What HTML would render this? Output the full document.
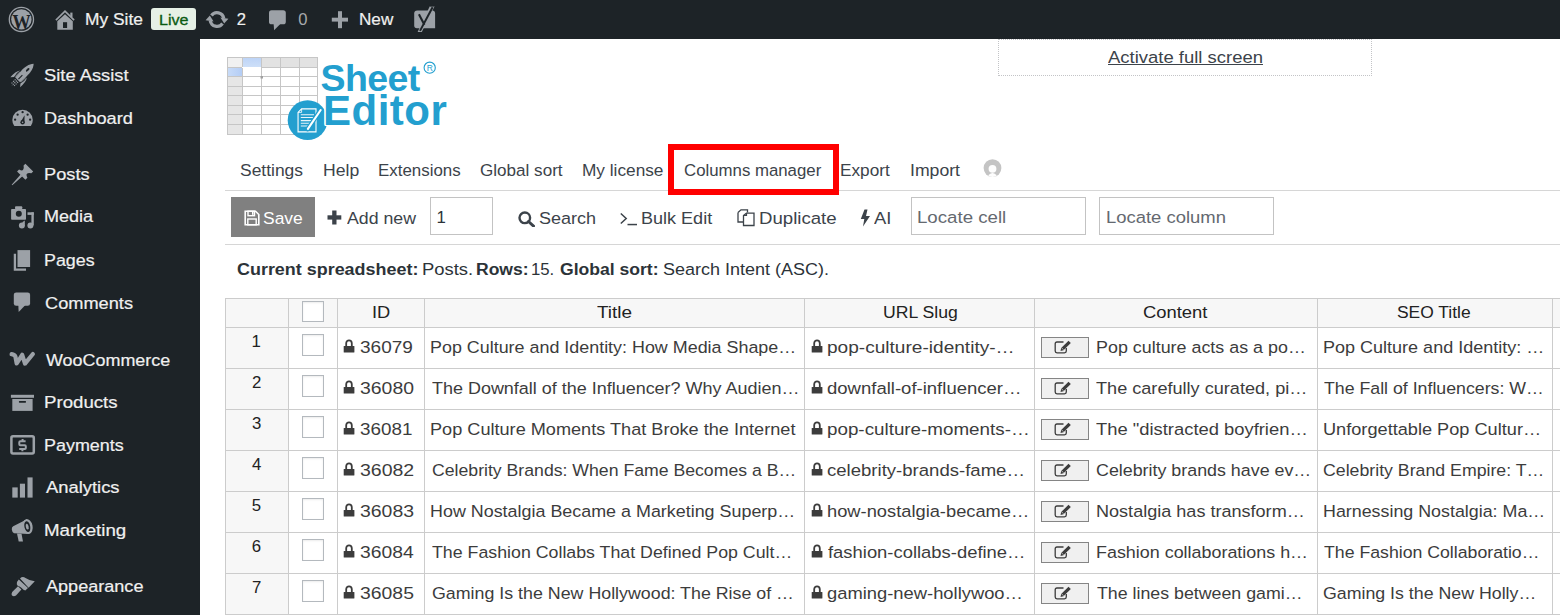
<!DOCTYPE html>
<html><head><meta charset="utf-8"><style>
html,body{margin:0;padding:0;width:1560px;height:615px;overflow:hidden;background:#fff;position:relative}
body{font-family:"Liberation Sans",sans-serif}
.a{position:absolute;display:block}
.t{position:absolute;white-space:nowrap;line-height:1;font-family:"Liberation Sans",sans-serif;transform-origin:0 0}
</style></head><body>
<div class="a" style="left:0;top:0;width:1560px;height:39px;background:#1d2327"></div>
<div class="a" style="left:0;top:39px;width:200px;height:576px;background:#1d2327"></div>
<svg class="a" style="left:0px;top:0px;overflow:visible" width="44" height="39" viewBox="0 0 44 39"><circle cx="21.4" cy="19.4" r="12.1" fill="none" stroke="#9ca1a7" stroke-width="1.3"/>
      <circle cx="21.4" cy="19.4" r="10.2" fill="#9ca1a7"/>
      <text x="21.5" y="28.6" font-family="Liberation Serif" font-weight="700" font-size="21" text-anchor="middle" textLength="18.5" lengthAdjust="spacingAndGlyphs" fill="#1d2327">W</text></svg>
<svg class="a" style="left:0px;top:0px;overflow:visible" width="80" height="39" viewBox="0 0 80 39"><path d="M56.5 19.5 L65 11.2 L73.5 19.5" fill="none" stroke="#9ca1a7" stroke-width="1.7" stroke-linecap="square"/>
      <rect x="70.3" y="12.6" width="2.2" height="4.6" fill="#9ca1a7"/>
      <path d="M57.3 21.2 L65 14.2 L72.8 21.2 L72.8 29.7 L57.3 29.7 Z" fill="#9ca1a7"/>
      <rect x="63" y="22.2" width="4.1" height="5.8" fill="#1d2327"/></svg>
<svg class="a" style="left:0px;top:0px;overflow:visible" width="240" height="39" viewBox="0 0 240 39"><path d="M211.46 15.47 A6.85 6.85 0 0 1 223.75 18.31" fill="none" stroke="#9ca1a7" stroke-width="3.2"/>
      <path d="M220.4 17.4 L228.4 18.8 L224.2 23.6 Z" fill="#9ca1a7"/>
      <path d="M222.54 23.53 A6.85 6.85 0 0 1 210.25 20.69" fill="none" stroke="#9ca1a7" stroke-width="3.2"/>
      <path d="M213.6 21.6 L205.6 20.2 L209.8 15.4 Z" fill="#9ca1a7"/></svg>
<svg class="a" style="left:0px;top:0px;overflow:visible" width="300" height="39" viewBox="0 0 300 39"><rect x="269" y="10.3" width="16.8" height="14" rx="2.6" fill="#9ca1a7"/><path d="M273.6 23.5 L274.1 30.3 L280.8 23.5 Z" fill="#9ca1a7"/></svg>
<svg class="a" style="left:0px;top:0px;overflow:visible" width="360" height="39" viewBox="0 0 360 39"><rect x="338" y="11.2" width="4" height="17" fill="#9ca1a7"/><rect x="331.8" y="17.7" width="16.2" height="3.9" fill="#9ca1a7"/></svg>
<svg class="a" style="left:0px;top:0px;overflow:visible" width="450" height="39" viewBox="0 0 450 39"><path d="M417.3 10.5 H432.1 Q435.1 10.5 435.1 13.5 V28.2 H416.9 Q414.2 28.2 414.2 25.5 V13.6 Q414.2 10.5 417.3 10.5 Z" fill="#9ca1a7"/>
      <path d="M429.8 6.2 L434.6 6.2 L421.8 32 L417.6 32 Z" fill="#9ca1a7"/>
      <path d="M432.6 7.2 L420 30.9" stroke="#1d2327" stroke-width="2"/>
      <path d="M418.9 14.3 L424.4 24.8" stroke="#1d2327" stroke-width="2.1"/>
      <path d="M429.8 6.2 L434.6 6.2" stroke="#1d2327" stroke-width="0.8"/></svg>
<div class="a" style="left:151px;top:8px;width:45px;height:22px;background:#e6f0e6;border-radius:3px"></div>
<svg class="a" style="left:0px;top:0px;overflow:visible" width="40" height="100" viewBox="0 0 40 100"><g transform="translate(22.6 74.9) rotate(45)">
      <path d="M0 -15.6 C3.4 -12 4 -7 3.8 -2 L3.3 7 L-3.3 7 L-3.8 -2 C-4 -7 -3.4 -12 0 -15.6 Z" fill="#9ca1a7"/>
      <ellipse cx="0" cy="-7.2" rx="1.05" ry="2.3" fill="#1d2327"/>
      <rect x="-0.55" y="0.3" width="1.1" height="5.6" fill="#1d2327"/>
      <path d="M-4.9 -1.2 Q-7.6 2.5 -6.9 10.4 L-4.5 7.6 Q-6 3 -4.9 -1.2 Z" fill="#9ca1a7"/>
      <path d="M4.9 -1.2 Q7.6 2.5 6.9 10.4 L4.5 7.6 Q6 3 4.9 -1.2 Z" fill="#9ca1a7"/>
      <path d="M-3 -1 L-4.6 0 L-4.4 6 L-3 7 Z M3 -1 L4.6 0 L4.4 6 L3 7 Z" fill="#9ca1a7" opacity="0.6"/>
      <path d="M-1.8 8.2 V14 M0 8.2 V15 M1.8 8.2 V14" stroke="#9ca1a7" stroke-width="1.1" stroke-dasharray="1.2 1"/></g></svg>
<svg class="a" style="left:0px;top:0px;overflow:visible" width="40" height="140" viewBox="0 0 40 140"><defs><clipPath id="gclip"><rect x="0" y="100" width="40" height="26.1"/></clipPath></defs>
      <circle cx="22.55" cy="119.9" r="10.25" fill="#9ca1a7" clip-path="url(#gclip)"/>
      <circle cx="22.6" cy="112.2" r="1.15" fill="#1d2327"/><circle cx="17.6" cy="114.7" r="1.15" fill="#1d2327"/><circle cx="27.6" cy="114.7" r="1.15" fill="#1d2327"/>
      <circle cx="15.1" cy="119.7" r="1.15" fill="#1d2327"/><circle cx="30.1" cy="119.7" r="1.15" fill="#1d2327"/>
      <path d="M24.6 115.2 L21 121.6 L24.4 122.6 Z" fill="#1d2327"/><circle cx="22.6" cy="122.2" r="2.2" fill="#1d2327"/><circle cx="22.6" cy="122.3" r="0.8" fill="#9ca1a7"/></svg>
<svg class="a" style="left:0px;top:0px;overflow:visible" width="40" height="200" viewBox="0 0 40 200"><g transform="translate(29.3 167.6) rotate(45)">
      <path d="M-5.5 0 H5.5 V2.6 Q2.6 4.5 2.8 6 Q2.6 7.5 5.9 8.6 V11.4 H-5.9 V8.6 Q-2.6 7.5 -2.8 6 Q-2.6 4.5 -5.5 2.6 Z" fill="#9ca1a7"/>
      <path d="M-1.3 11 L1.3 11 L0.4 24.5 L-0.4 24.5 Z" fill="#9ca1a7"/></g></svg>
<svg class="a" style="left:6px;top:203px;overflow:visible" width="34" height="30" viewBox="0 0 34 30"><rect x="5.1" y="5.9" width="14.9" height="10.9" rx="0.8" fill="#9ca1a7"/><rect x="9" y="3.2" width="7.3" height="3" rx="1" fill="#9ca1a7"/>
      <circle cx="12.8" cy="10.7" r="3" fill="#1d2327"/>
      <rect x="25.4" y="9.3" width="2.4" height="13" fill="#9ca1a7"/><rect x="21.5" y="9.3" width="6.3" height="2.6" fill="#9ca1a7"/>
      <circle cx="24.4" cy="22.6" r="3" fill="#9ca1a7"/><circle cx="15.9" cy="22.4" r="3" fill="#9ca1a7"/><path d="M16.2 19.3 L18.8 17.4 L18.8 22 Z" fill="#9ca1a7"/></svg>
<svg class="a" style="left:6px;top:246px;overflow:visible" width="34" height="30" viewBox="0 0 34 30"><rect x="11.5" y="4.1" width="12.6" height="16.9" fill="#9ca1a7"/><path d="M8.9 7.8 V23.7 H20" fill="none" stroke="#9ca1a7" stroke-width="2.3"/></svg>
<svg class="a" style="left:6px;top:289px;overflow:visible" width="34" height="30" viewBox="0 0 34 30"><rect x="7.8" y="3.4" width="16.3" height="13.4" rx="2.4" fill="#9ca1a7"/><path d="M12.3 16 L12.7 22.9 L19.4 16 Z" fill="#9ca1a7"/></svg>
<svg class="a" style="left:6px;top:345px;overflow:visible" width="34" height="30" viewBox="0 0 34 30"><path d="M5.6 9.2 Q8.6 9.6 9.4 11.5 L10.7 18.5 L16.2 9.8 L19 18.6 L26.9 9" fill="none" stroke="#9ca1a7" stroke-width="4.2" stroke-linecap="round" stroke-linejoin="round"/></svg>
<svg class="a" style="left:6px;top:388px;overflow:visible" width="34" height="30" viewBox="0 0 34 30"><rect x="4.9" y="6.8" width="23.1" height="3" fill="#9ca1a7"/><rect x="6.3" y="11" width="20.3" height="11.9" fill="#9ca1a7"/><rect x="12.9" y="12.9" width="7.1" height="1.8" rx="0.6" fill="#1d2327"/></svg>
<svg class="a" style="left:6px;top:430px;overflow:visible" width="34" height="30" viewBox="0 0 34 30"><rect x="5.4" y="6.3" width="22.4" height="17.1" rx="1.6" fill="none" stroke="#9ca1a7" stroke-width="2.5"/>
      <path d="M19.6 11.3 H14.3 Q13.3 11.3 13.3 12.3 V14.2 Q13.3 15.2 14.3 15.2 H18.8 Q19.8 15.2 19.8 16.2 V18 Q19.8 19 18.8 19 H13.2" fill="none" stroke="#9ca1a7" stroke-width="2"/>
      <path d="M16.6 9 V11.3 M16.4 19 V21.2" stroke="#9ca1a7" stroke-width="2"/></svg>
<svg class="a" style="left:6px;top:472px;overflow:visible" width="34" height="30" viewBox="0 0 34 30"><rect x="6.3" y="15.4" width="5.4" height="10.2" fill="#9ca1a7"/><rect x="13.9" y="11.7" width="5.1" height="13.9" fill="#9ca1a7"/><rect x="21.5" y="5.4" width="5.1" height="20.2" fill="#9ca1a7"/></svg>
<svg class="a" style="left:6px;top:515px;overflow:visible" width="34" height="30" viewBox="0 0 34 30"><path d="M21 4.2 L7.2 11.3 Q5.5 12.3 5.8 14.4 Q6.2 17.5 8 18.2 L22.5 19 Z" fill="#9ca1a7"/>
      <ellipse cx="21.6" cy="11.6" rx="5" ry="7.6" transform="rotate(-12 21.6 11.6)" fill="#9ca1a7"/>
      <ellipse cx="21.3" cy="11.6" rx="2.9" ry="5.5" transform="rotate(-12 21.3 11.6)" fill="#1d2327"/>
      <ellipse cx="21.2" cy="11.6" rx="1.4" ry="3" transform="rotate(-12 21.2 11.6)" fill="#9ca1a7"/>
      <path d="M11 18.5 L15.5 18.8 L17 26.6 L12.7 26.6 Z" fill="#9ca1a7"/></svg>
<svg class="a" style="left:6px;top:572px;overflow:visible" width="34" height="30" viewBox="0 0 34 30"><path d="M14 6.5 Q16.5 4 19.5 6 Q23 8.5 28.8 9.2 L22.6 15.8 Z" fill="#9ca1a7"/>
      <path d="M12.8 7.6 L22 16 L19.3 18.6 L17.5 17.8 L15 15.5 L13.5 14.5 Q11.2 14 10.8 12.2 Q10.4 10 12.8 7.6 Z" fill="#9ca1a7"/>
      <path d="M12 14.2 L15.4 17.6 L10 23.4 Q8 24.8 6 23.6 Q4.9 22 6.2 20 Z" fill="#9ca1a7"/></svg>
<svg class="a" style="left:227px;top:57px" width="91" height="78" viewBox="0 0 91 78"><defs><linearGradient id="bh" x1="0" y1="0" x2="0" y2="1"><stop offset="0" stop-color="#bcd3f7"/><stop offset="1" stop-color="#cddff8"/></linearGradient><linearGradient id="bv" x1="0" y1="0" x2="1" y2="0"><stop offset="0" stop-color="#c9dcf8"/><stop offset="1" stop-color="#b4cdf5"/></linearGradient></defs><rect x="0" y="0" width="91" height="78" fill="#fff"/><rect x="0" y="0" width="91" height="10" fill="#e2e2e2"/><rect x="0" y="0" width="15" height="78" fill="#e6e6e6"/><rect x="0" y="0" width="15" height="10" fill="#f1f1f1"/><rect x="15" y="0" width="19" height="10" fill="url(#bh)"/><rect x="0" y="10" width="15" height="9" fill="url(#bv)"/><rect x="0" y="0" width="1" height="78" fill="#c6c6c6"/><rect x="15" y="0" width="1" height="78" fill="#c6c6c6"/><rect x="34" y="0" width="1" height="78" fill="#c6c6c6"/><rect x="53" y="0" width="1" height="78" fill="#c6c6c6"/><rect x="72" y="0" width="1" height="78" fill="#c6c6c6"/><rect x="90" y="0" width="1" height="78" fill="#c6c6c6"/><rect x="0" y="0" width="91" height="1" fill="#c6c6c6"/><rect x="0" y="10" width="91" height="1" fill="#c6c6c6"/><rect x="0" y="19" width="91" height="1" fill="#c6c6c6"/><rect x="0" y="29" width="91" height="1" fill="#c6c6c6"/><rect x="0" y="38" width="91" height="1" fill="#c6c6c6"/><rect x="0" y="48" width="91" height="1" fill="#c6c6c6"/><rect x="0" y="57" width="91" height="1" fill="#c6c6c6"/><rect x="0" y="67" width="91" height="1" fill="#c6c6c6"/><rect x="0" y="77" width="91" height="1" fill="#c6c6c6"/><rect x="15" y="10" width="19" height="1" fill="#fff"/><rect x="33.5" y="19" width="2.5" height="2.5" fill="#a0a0a0"/></svg>
<svg class="a" style="left:284px;top:96px" width="48" height="48" viewBox="0 0 48 48"><circle cx="23.6" cy="24.2" r="19.9" fill="#239fcf"/>
       <path d="M17.6 12.9 H32 V35.9 H14.05 V16.4 Z" fill="none" stroke="#fff" stroke-width="1.1"/>
       <path d="M14.05 16.4 H17.6 V12.9" fill="none" stroke="#fff" stroke-width="0.8"/>
       <path d="M16.8 18.7 H30 M16.8 21.5 H30 M16.8 24.6 H30 M16.8 27.3 H27 M16.8 30 H24" stroke="#fff" stroke-width="1.1" opacity="0.9"/>
       <path d="M36.9 13.6 L23.6 33.2" stroke="#239fcf" stroke-width="4.4" stroke-linecap="round"/>
       <path d="M36.7 14 L23.9 32.8" stroke="#fff" stroke-width="2.1" stroke-linecap="round"/></svg>
<div class="t" style="left:320.5px;top:57.5px;font-size:37.5px;font-weight:700;color:#239fcf;letter-spacing:-0.6px;line-height:1.117">Sheet</div>
<div class="t" style="left:323px;top:88.0px;font-size:42px;font-weight:700;color:#239fcf;letter-spacing:0.5px;line-height:1.117;text-shadow:-1.6px 0 0 #fff,-1.2px -1.2px 0 #fff,-1.2px 1.2px 0 #fff">Editor</div>
<svg class="a" style="left:423px;top:61px" width="14" height="14" viewBox="0 0 14 14"><circle cx="6.7" cy="6.7" r="5.6" fill="none" stroke="#239fcf" stroke-width="1.1"/><text x="6.8" y="10" font-family="Liberation Sans" font-size="8.5" text-anchor="middle" fill="#239fcf">R</text></svg>
<div class="a" style="left:998px;top:39px;width:372px;height:35px;border:1px dotted #c3c4c7;background:#fff"></div>
<div class="a" style="left:225px;top:190px;width:1335px;height:1px;background:#d6d6d6"></div>
<div class="a" style="left:668px;top:144px;width:159px;height:39px;border:6px solid #ff0000"></div>
<div class="a" style="left:225px;top:244px;width:1335px;height:1px;background:#d6d6d6"></div>
<div class="a" style="left:231px;top:197px;width:84px;height:40px;background:#808080"></div>
<div class="a" style="left:430px;top:197px;width:63px;height:38px;box-sizing:border-box;border:1px solid #c3c3c3;background:#fff"></div>
<div class="a" style="left:911px;top:197px;width:175px;height:38px;box-sizing:border-box;border:1px solid #c3c3c3;background:#fff"></div>
<div class="a" style="left:1099px;top:197px;width:175px;height:38px;box-sizing:border-box;border:1px solid #c3c3c3;background:#fff"></div>
<svg class="a" style="left:243.5px;top:209.5px" width="16" height="16" viewBox="0 0 16 16"><path d="M1.2 1.2 H11.5 L14.8 4.5 V14.8 H1.2 Z" fill="none" stroke="#fff" stroke-width="1.6"/>
      <rect x="4" y="1.2" width="6.5" height="4.5" fill="none" stroke="#fff" stroke-width="1.4"/><rect x="8" y="2" width="1.5" height="2.8" fill="#fff"/>
      <rect x="3.8" y="9" width="8.4" height="5.8" fill="none" stroke="#fff" stroke-width="1.4"/></svg>
<svg class="a" style="left:327px;top:209.5px" width="15" height="15" viewBox="0 0 15 15"><rect x="5.2" y="0.5" width="4.3" height="14" fill="#3c434a"/><rect x="0.5" y="5.3" width="13.8" height="4.3" fill="#3c434a"/></svg>
<svg class="a" style="left:518px;top:210.5px" width="17" height="16" viewBox="0 0 17 16"><circle cx="6.8" cy="6.8" r="5.3" fill="none" stroke="#3c434a" stroke-width="2.4"/><path d="M10.5 10.5 L15.5 15" stroke="#3c434a" stroke-width="3" stroke-linecap="round"/></svg>
<svg class="a" style="left:620px;top:211px" width="18" height="15" viewBox="0 0 18 15"><path d="M0.8 2.5 L6.2 7.5 L0.8 12.5" fill="none" stroke="#3c434a" stroke-width="1.5"/><rect x="7.5" y="12.8" width="9.5" height="1.5" fill="#3c434a"/></svg>
<svg class="a" style="left:737px;top:209px" width="18" height="18" viewBox="0 0 18 18"><path d="M1 3.5 L4 0.8 H10.5 V3.5" fill="none" stroke="#3c434a" stroke-width="1.3"/><path d="M1 3.5 V13 H6" fill="none" stroke="#3c434a" stroke-width="1.3"/>
      <path d="M6.5 6.5 L9.5 4.2 H17 V16.5 H6.5 Z" fill="#fff" stroke="#3c434a" stroke-width="1.3"/><path d="M6.5 6.5 H9.5 V4.2" fill="none" stroke="#3c434a" stroke-width="1.2"/></svg>
<svg class="a" style="left:859.5px;top:208.5px" width="11" height="18" viewBox="0 0 11 18"><path d="M4.5 0.5 L7.5 0.5 L6 7 L10 7 L3 17.5 L4.3 10 L0.8 10 Z" fill="#3c434a"/></svg>
<svg class="a" style="left:982.5px;top:158.5px" width="19" height="19" viewBox="0 0 19 19"><defs><clipPath id="av"><circle cx="9.5" cy="9.1" r="8.9"/></clipPath></defs>
      <circle cx="9.5" cy="9.1" r="8.9" fill="#c4c4c4"/><g clip-path="url(#av)"><circle cx="9.5" cy="9.8" r="3.9" fill="#fdfdfd"/><ellipse cx="9.5" cy="19.5" rx="4.6" ry="5.5" fill="#fdfdfd"/></g></svg>
<div class="a" style="left:225px;top:298px;width:1335px;height:29px;background:#f7f7f7"></div>
<div class="a" style="left:225px;top:327px;width:63px;height:288px;background:#f7f7f7"></div>
<div class="a" style="left:225px;top:298px;width:1335px;height:1px;background:#cccccc"></div>
<div class="a" style="left:225px;top:327px;width:1335px;height:1px;background:#cccccc"></div>
<div class="a" style="left:225px;top:368px;width:1335px;height:1px;background:#cccccc"></div>
<div class="a" style="left:225px;top:409px;width:1335px;height:1px;background:#cccccc"></div>
<div class="a" style="left:225px;top:450px;width:1335px;height:1px;background:#cccccc"></div>
<div class="a" style="left:225px;top:491px;width:1335px;height:1px;background:#cccccc"></div>
<div class="a" style="left:225px;top:532px;width:1335px;height:1px;background:#cccccc"></div>
<div class="a" style="left:225px;top:573px;width:1335px;height:1px;background:#cccccc"></div>
<div class="a" style="left:225px;top:614px;width:1335px;height:1px;background:#cccccc"></div>
<div class="a" style="left:225px;top:298px;width:1px;height:317px;background:#cccccc"></div>
<div class="a" style="left:288px;top:298px;width:1px;height:317px;background:#cccccc"></div>
<div class="a" style="left:337px;top:298px;width:1px;height:317px;background:#cccccc"></div>
<div class="a" style="left:424px;top:298px;width:1px;height:317px;background:#cccccc"></div>
<div class="a" style="left:804px;top:298px;width:1px;height:317px;background:#cccccc"></div>
<div class="a" style="left:1034px;top:298px;width:1px;height:317px;background:#cccccc"></div>
<div class="a" style="left:1317px;top:298px;width:1px;height:317px;background:#cccccc"></div>
<div class="a" style="left:1552px;top:298px;width:1px;height:317px;background:#cccccc"></div>
<div class="a" style="left:302px;top:301px;width:22px;height:21px;box-sizing:border-box;border:1px solid #b4b9be;background:#fff;box-shadow:inset 0 1px 2px rgba(0,0,0,.08)"></div>
<div class="a" style="left:302px;top:334px;width:22px;height:22px;box-sizing:border-box;border:1px solid #b4b9be;background:#fff;box-shadow:inset 0 1px 2px rgba(0,0,0,.08)"></div>
<svg class="a" style="left:343px;top:339px" width="12" height="14" viewBox="0 0 12 14"><path d="M3.2 7 V4.3 A2.8 3 0 0 1 8.8 4.3 V7" fill="none" stroke="#3c3c3c" stroke-width="1.8"/><rect x="0.7" y="6.9" width="10.7" height="6.6" rx="0.6" fill="#3c3c3c"/></svg>
<svg class="a" style="left:810.5px;top:339px" width="12" height="14" viewBox="0 0 12 14"><path d="M3.2 7 V4.3 A2.8 3 0 0 1 8.8 4.3 V7" fill="none" stroke="#3c3c3c" stroke-width="1.8"/><rect x="0.7" y="6.9" width="10.7" height="6.6" rx="0.6" fill="#3c3c3c"/></svg>
<div class="a" style="left:1041px;top:337px;width:48px;height:21px;box-sizing:border-box;border:1px solid #858585;background:#f0f0f0"></div>
<svg class="a" style="left:1054px;top:340px" width="18" height="14" viewBox="0 0 18 14"><path d="M9.5 2 H3 Q1.2 2 1.2 3.8 V11 Q1.2 12.8 3 12.8 H10.5 Q12.3 12.8 12.3 11 V8" fill="none" stroke="#3c3c3c" stroke-width="1.3"/><path d="M14.5 0.8 L16.8 3 L9.5 10.3 L6.5 11 L7.2 8 Z" fill="#3c3c3c"/><path d="M8 8.2 L9.3 9.6" stroke="#f0f0f0" stroke-width="0.8"/></svg>
<div class="a" style="left:302px;top:375px;width:22px;height:22px;box-sizing:border-box;border:1px solid #b4b9be;background:#fff;box-shadow:inset 0 1px 2px rgba(0,0,0,.08)"></div>
<svg class="a" style="left:343px;top:380px" width="12" height="14" viewBox="0 0 12 14"><path d="M3.2 7 V4.3 A2.8 3 0 0 1 8.8 4.3 V7" fill="none" stroke="#3c3c3c" stroke-width="1.8"/><rect x="0.7" y="6.9" width="10.7" height="6.6" rx="0.6" fill="#3c3c3c"/></svg>
<svg class="a" style="left:810.5px;top:380px" width="12" height="14" viewBox="0 0 12 14"><path d="M3.2 7 V4.3 A2.8 3 0 0 1 8.8 4.3 V7" fill="none" stroke="#3c3c3c" stroke-width="1.8"/><rect x="0.7" y="6.9" width="10.7" height="6.6" rx="0.6" fill="#3c3c3c"/></svg>
<div class="a" style="left:1041px;top:378px;width:48px;height:21px;box-sizing:border-box;border:1px solid #858585;background:#f0f0f0"></div>
<svg class="a" style="left:1054px;top:381px" width="18" height="14" viewBox="0 0 18 14"><path d="M9.5 2 H3 Q1.2 2 1.2 3.8 V11 Q1.2 12.8 3 12.8 H10.5 Q12.3 12.8 12.3 11 V8" fill="none" stroke="#3c3c3c" stroke-width="1.3"/><path d="M14.5 0.8 L16.8 3 L9.5 10.3 L6.5 11 L7.2 8 Z" fill="#3c3c3c"/><path d="M8 8.2 L9.3 9.6" stroke="#f0f0f0" stroke-width="0.8"/></svg>
<div class="a" style="left:302px;top:416px;width:22px;height:22px;box-sizing:border-box;border:1px solid #b4b9be;background:#fff;box-shadow:inset 0 1px 2px rgba(0,0,0,.08)"></div>
<svg class="a" style="left:343px;top:421px" width="12" height="14" viewBox="0 0 12 14"><path d="M3.2 7 V4.3 A2.8 3 0 0 1 8.8 4.3 V7" fill="none" stroke="#3c3c3c" stroke-width="1.8"/><rect x="0.7" y="6.9" width="10.7" height="6.6" rx="0.6" fill="#3c3c3c"/></svg>
<svg class="a" style="left:810.5px;top:421px" width="12" height="14" viewBox="0 0 12 14"><path d="M3.2 7 V4.3 A2.8 3 0 0 1 8.8 4.3 V7" fill="none" stroke="#3c3c3c" stroke-width="1.8"/><rect x="0.7" y="6.9" width="10.7" height="6.6" rx="0.6" fill="#3c3c3c"/></svg>
<div class="a" style="left:1041px;top:419px;width:48px;height:21px;box-sizing:border-box;border:1px solid #858585;background:#f0f0f0"></div>
<svg class="a" style="left:1054px;top:422px" width="18" height="14" viewBox="0 0 18 14"><path d="M9.5 2 H3 Q1.2 2 1.2 3.8 V11 Q1.2 12.8 3 12.8 H10.5 Q12.3 12.8 12.3 11 V8" fill="none" stroke="#3c3c3c" stroke-width="1.3"/><path d="M14.5 0.8 L16.8 3 L9.5 10.3 L6.5 11 L7.2 8 Z" fill="#3c3c3c"/><path d="M8 8.2 L9.3 9.6" stroke="#f0f0f0" stroke-width="0.8"/></svg>
<div class="a" style="left:302px;top:457px;width:22px;height:22px;box-sizing:border-box;border:1px solid #b4b9be;background:#fff;box-shadow:inset 0 1px 2px rgba(0,0,0,.08)"></div>
<svg class="a" style="left:343px;top:462px" width="12" height="14" viewBox="0 0 12 14"><path d="M3.2 7 V4.3 A2.8 3 0 0 1 8.8 4.3 V7" fill="none" stroke="#3c3c3c" stroke-width="1.8"/><rect x="0.7" y="6.9" width="10.7" height="6.6" rx="0.6" fill="#3c3c3c"/></svg>
<svg class="a" style="left:810.5px;top:462px" width="12" height="14" viewBox="0 0 12 14"><path d="M3.2 7 V4.3 A2.8 3 0 0 1 8.8 4.3 V7" fill="none" stroke="#3c3c3c" stroke-width="1.8"/><rect x="0.7" y="6.9" width="10.7" height="6.6" rx="0.6" fill="#3c3c3c"/></svg>
<div class="a" style="left:1041px;top:460px;width:48px;height:21px;box-sizing:border-box;border:1px solid #858585;background:#f0f0f0"></div>
<svg class="a" style="left:1054px;top:463px" width="18" height="14" viewBox="0 0 18 14"><path d="M9.5 2 H3 Q1.2 2 1.2 3.8 V11 Q1.2 12.8 3 12.8 H10.5 Q12.3 12.8 12.3 11 V8" fill="none" stroke="#3c3c3c" stroke-width="1.3"/><path d="M14.5 0.8 L16.8 3 L9.5 10.3 L6.5 11 L7.2 8 Z" fill="#3c3c3c"/><path d="M8 8.2 L9.3 9.6" stroke="#f0f0f0" stroke-width="0.8"/></svg>
<div class="a" style="left:302px;top:498px;width:22px;height:22px;box-sizing:border-box;border:1px solid #b4b9be;background:#fff;box-shadow:inset 0 1px 2px rgba(0,0,0,.08)"></div>
<svg class="a" style="left:343px;top:503px" width="12" height="14" viewBox="0 0 12 14"><path d="M3.2 7 V4.3 A2.8 3 0 0 1 8.8 4.3 V7" fill="none" stroke="#3c3c3c" stroke-width="1.8"/><rect x="0.7" y="6.9" width="10.7" height="6.6" rx="0.6" fill="#3c3c3c"/></svg>
<svg class="a" style="left:810.5px;top:503px" width="12" height="14" viewBox="0 0 12 14"><path d="M3.2 7 V4.3 A2.8 3 0 0 1 8.8 4.3 V7" fill="none" stroke="#3c3c3c" stroke-width="1.8"/><rect x="0.7" y="6.9" width="10.7" height="6.6" rx="0.6" fill="#3c3c3c"/></svg>
<div class="a" style="left:1041px;top:501px;width:48px;height:21px;box-sizing:border-box;border:1px solid #858585;background:#f0f0f0"></div>
<svg class="a" style="left:1054px;top:504px" width="18" height="14" viewBox="0 0 18 14"><path d="M9.5 2 H3 Q1.2 2 1.2 3.8 V11 Q1.2 12.8 3 12.8 H10.5 Q12.3 12.8 12.3 11 V8" fill="none" stroke="#3c3c3c" stroke-width="1.3"/><path d="M14.5 0.8 L16.8 3 L9.5 10.3 L6.5 11 L7.2 8 Z" fill="#3c3c3c"/><path d="M8 8.2 L9.3 9.6" stroke="#f0f0f0" stroke-width="0.8"/></svg>
<div class="a" style="left:302px;top:539px;width:22px;height:22px;box-sizing:border-box;border:1px solid #b4b9be;background:#fff;box-shadow:inset 0 1px 2px rgba(0,0,0,.08)"></div>
<svg class="a" style="left:343px;top:544px" width="12" height="14" viewBox="0 0 12 14"><path d="M3.2 7 V4.3 A2.8 3 0 0 1 8.8 4.3 V7" fill="none" stroke="#3c3c3c" stroke-width="1.8"/><rect x="0.7" y="6.9" width="10.7" height="6.6" rx="0.6" fill="#3c3c3c"/></svg>
<svg class="a" style="left:810.5px;top:544px" width="12" height="14" viewBox="0 0 12 14"><path d="M3.2 7 V4.3 A2.8 3 0 0 1 8.8 4.3 V7" fill="none" stroke="#3c3c3c" stroke-width="1.8"/><rect x="0.7" y="6.9" width="10.7" height="6.6" rx="0.6" fill="#3c3c3c"/></svg>
<div class="a" style="left:1041px;top:542px;width:48px;height:21px;box-sizing:border-box;border:1px solid #858585;background:#f0f0f0"></div>
<svg class="a" style="left:1054px;top:545px" width="18" height="14" viewBox="0 0 18 14"><path d="M9.5 2 H3 Q1.2 2 1.2 3.8 V11 Q1.2 12.8 3 12.8 H10.5 Q12.3 12.8 12.3 11 V8" fill="none" stroke="#3c3c3c" stroke-width="1.3"/><path d="M14.5 0.8 L16.8 3 L9.5 10.3 L6.5 11 L7.2 8 Z" fill="#3c3c3c"/><path d="M8 8.2 L9.3 9.6" stroke="#f0f0f0" stroke-width="0.8"/></svg>
<div class="a" style="left:302px;top:580px;width:22px;height:22px;box-sizing:border-box;border:1px solid #b4b9be;background:#fff;box-shadow:inset 0 1px 2px rgba(0,0,0,.08)"></div>
<svg class="a" style="left:343px;top:585px" width="12" height="14" viewBox="0 0 12 14"><path d="M3.2 7 V4.3 A2.8 3 0 0 1 8.8 4.3 V7" fill="none" stroke="#3c3c3c" stroke-width="1.8"/><rect x="0.7" y="6.9" width="10.7" height="6.6" rx="0.6" fill="#3c3c3c"/></svg>
<svg class="a" style="left:810.5px;top:585px" width="12" height="14" viewBox="0 0 12 14"><path d="M3.2 7 V4.3 A2.8 3 0 0 1 8.8 4.3 V7" fill="none" stroke="#3c3c3c" stroke-width="1.8"/><rect x="0.7" y="6.9" width="10.7" height="6.6" rx="0.6" fill="#3c3c3c"/></svg>
<div class="a" style="left:1041px;top:583px;width:48px;height:21px;box-sizing:border-box;border:1px solid #858585;background:#f0f0f0"></div>
<svg class="a" style="left:1054px;top:586px" width="18" height="14" viewBox="0 0 18 14"><path d="M9.5 2 H3 Q1.2 2 1.2 3.8 V11 Q1.2 12.8 3 12.8 H10.5 Q12.3 12.8 12.3 11 V8" fill="none" stroke="#3c3c3c" stroke-width="1.3"/><path d="M14.5 0.8 L16.8 3 L9.5 10.3 L6.5 11 L7.2 8 Z" fill="#3c3c3c"/><path d="M8 8.2 L9.3 9.6" stroke="#f0f0f0" stroke-width="0.8"/></svg>
<div class="t" style="left:84.58px;top:12px;font-size:16.6px;color:#f0f0f0;font-weight:400;transform:scaleX(1.0468);-webkit-text-stroke:0.2px #f0f0f0;">My Site</div>
<div class="t" style="left:158.84px;top:12px;font-size:15px;color:#0a5a12;font-weight:400;transform:scaleX(1.0738);-webkit-text-stroke:0.3px #0a5a12;">Live</div>
<div class="t" style="left:236.86px;top:12px;font-size:16.6px;color:#f0f0f0;font-weight:400;-webkit-text-stroke:0.2px #f0f0f0;">2</div>
<div class="t" style="left:298.13px;top:12px;font-size:16.6px;color:#a7aaad;font-weight:400;">0</div>
<div class="t" style="left:358.64px;top:12px;font-size:16.6px;color:#f0f0f0;font-weight:400;transform:scaleX(1.0322);-webkit-text-stroke:0.2px #f0f0f0;">New</div>
<div class="t" style="left:44.28px;top:68px;font-size:16.8px;color:#f0f0f0;font-weight:400;transform:scaleX(1.0929);-webkit-text-stroke:0.2px #f0f0f0;">Site Assist</div>
<div class="t" style="left:44.00px;top:111px;font-size:16.8px;color:#f0f0f0;font-weight:400;transform:scaleX(1.0827);-webkit-text-stroke:0.2px #f0f0f0;">Dashboard</div>
<div class="t" style="left:44.02px;top:167px;font-size:16.8px;color:#f0f0f0;font-weight:400;transform:scaleX(1.0858);-webkit-text-stroke:0.2px #f0f0f0;">Posts</div>
<div class="t" style="left:44.08px;top:209px;font-size:16.8px;color:#f0f0f0;font-weight:400;transform:scaleX(1.0756);-webkit-text-stroke:0.2px #f0f0f0;">Media</div>
<div class="t" style="left:44.11px;top:253px;font-size:16.8px;color:#f0f0f0;font-weight:400;transform:scaleX(1.0631);-webkit-text-stroke:0.2px #f0f0f0;">Pages</div>
<div class="t" style="left:44.56px;top:296px;font-size:16.8px;color:#f0f0f0;font-weight:400;transform:scaleX(1.0849);-webkit-text-stroke:0.2px #f0f0f0;">Comments</div>
<div class="t" style="left:45.52px;top:353px;font-size:16.8px;color:#f0f0f0;font-weight:400;transform:scaleX(1.0687);-webkit-text-stroke:0.2px #f0f0f0;">WooCommerce</div>
<div class="t" style="left:44.44px;top:395px;font-size:16.8px;color:#f0f0f0;font-weight:400;transform:scaleX(1.1112);-webkit-text-stroke:0.2px #f0f0f0;">Products</div>
<div class="t" style="left:44.10px;top:438px;font-size:16.8px;color:#f0f0f0;font-weight:400;transform:scaleX(1.0683);-webkit-text-stroke:0.2px #f0f0f0;">Payments</div>
<div class="t" style="left:45.52px;top:480px;font-size:16.8px;color:#f0f0f0;font-weight:400;transform:scaleX(1.0952);-webkit-text-stroke:0.2px #f0f0f0;">Analytics</div>
<div class="t" style="left:44.44px;top:523px;font-size:16.8px;color:#f0f0f0;font-weight:400;transform:scaleX(1.1166);-webkit-text-stroke:0.2px #f0f0f0;">Marketing</div>
<div class="t" style="left:45.52px;top:579px;font-size:16.8px;color:#f0f0f0;font-weight:400;transform:scaleX(1.0767);-webkit-text-stroke:0.2px #f0f0f0;">Appearance</div>
<div class="t" style="left:1107.96px;top:50px;font-size:16.8px;color:#3c434a;font-weight:400;transform:scaleX(1.1003);text-decoration:underline;">Activate full screen</div>
<div class="t" style="left:240.44px;top:163px;font-size:16.8px;color:#3c434a;font-weight:400;transform:scaleX(1.0390);">Settings</div>
<div class="t" style="left:322.75px;top:163px;font-size:16.8px;color:#3c434a;font-weight:400;transform:scaleX(1.0476);">Help</div>
<div class="t" style="left:377.93px;top:163px;font-size:16.8px;color:#3c434a;font-weight:400;transform:scaleX(1.0071);">Extensions</div>
<div class="t" style="left:480.01px;top:163px;font-size:16.8px;color:#3c434a;font-weight:400;transform:scaleX(1.0176);">Global sort</div>
<div class="t" style="left:582.47px;top:163px;font-size:16.8px;color:#3c434a;font-weight:400;transform:scaleX(1.0276);">My license</div>
<div class="t" style="left:683.74px;top:163px;font-size:16.8px;color:#3c434a;font-weight:400;transform:scaleX(1.0009);">Columns manager</div>
<div class="t" style="left:840.05px;top:163px;font-size:16.8px;color:#3c434a;font-weight:400;transform:scaleX(1.0263);">Export</div>
<div class="t" style="left:910.33px;top:163px;font-size:16.8px;color:#3c434a;font-weight:400;transform:scaleX(1.0517);">Import</div>
<div class="t" style="left:263.47px;top:211px;font-size:16.8px;color:#ffffff;font-weight:400;transform:scaleX(1.0405);">Save</div>
<div class="t" style="left:346.54px;top:211px;font-size:16.8px;color:#3c434a;font-weight:400;transform:scaleX(1.0571);">Add new</div>
<div class="t" style="left:436.43px;top:210px;font-size:16.8px;color:#2c3338;font-weight:400;">1</div>
<div class="t" style="left:539.37px;top:211px;font-size:16.8px;color:#3c434a;font-weight:400;transform:scaleX(1.0737);">Search</div>
<div class="t" style="left:641.42px;top:211px;font-size:16.8px;color:#3c434a;font-weight:400;transform:scaleX(1.0746);">Bulk Edit</div>
<div class="t" style="left:758.88px;top:211px;font-size:16.8px;color:#3c434a;font-weight:400;transform:scaleX(1.1099);">Duplicate</div>
<div class="t" style="left:874.40px;top:211px;font-size:16.8px;color:#3c434a;font-weight:400;transform:scaleX(1.0954);">AI</div>
<div class="t" style="left:916.61px;top:210px;font-size:16.8px;color:#646970;font-weight:400;transform:scaleX(1.1115);">Locate cell</div>
<div class="t" style="left:1105.56px;top:210px;font-size:16.8px;color:#646970;font-weight:400;transform:scaleX(1.0987);">Locate column</div>
<div class="t" style="left:237.38px;top:262px;font-size:16.8px;color:#2c3338;font-weight:700;transform:scaleX(1.0685);">Current spreadsheet:</div>
<div class="t" style="left:421.54px;top:262px;font-size:16.8px;color:#2c3338;font-weight:400;transform:scaleX(1.0972);">Posts.</div>
<div class="t" style="left:476.07px;top:262px;font-size:16.8px;color:#2c3338;font-weight:700;transform:scaleX(1.0436);">Rows:</div>
<div class="t" style="left:530.96px;top:262px;font-size:16.8px;color:#2c3338;font-weight:400;">15.</div>
<div class="t" style="left:560.01px;top:262px;font-size:16.8px;color:#2c3338;font-weight:700;transform:scaleX(1.0467);">Global sort:</div>
<div class="t" style="left:662.96px;top:262px;font-size:16.8px;color:#2c3338;font-weight:400;transform:scaleX(1.0714);">Search Intent (ASC).</div>
<div class="t" style="left:371.57px;top:305px;font-size:16.8px;color:#222;font-weight:400;transform:scaleX(1.0895);">ID</div>
<div class="t" style="left:597.18px;top:305px;font-size:16.8px;color:#222;font-weight:400;transform:scaleX(1.1261);">Title</div>
<div class="t" style="left:882.52px;top:305px;font-size:16.8px;color:#222;font-weight:400;transform:scaleX(1.0505);">URL Slug</div>
<div class="t" style="left:1143.47px;top:305px;font-size:16.8px;color:#222;font-weight:400;transform:scaleX(1.0966);">Content</div>
<div class="t" style="left:1397.49px;top:305px;font-size:16.8px;color:#222;font-weight:400;transform:scaleX(1.0384);">SEO Title</div>
<div class="t" style="left:251.55px;top:334px;font-size:16.8px;color:#222;font-weight:400;">1</div>
<div class="t" style="left:359.77px;top:340px;font-size:16.8px;color:#3c3c3c;font-weight:400;transform:scaleX(1.1328);">36079</div>
<div class="t" style="left:430.27px;top:340px;font-size:16.8px;color:#3c3c3c;font-weight:400;transform:scaleX(1.0666);">Pop Culture and Identity: How Media Shape…</div>
<div class="t" style="left:826.59px;top:340px;font-size:16.8px;color:#3c3c3c;font-weight:400;transform:scaleX(1.1369);">pop-culture-identity-…</div>
<div class="t" style="left:1095.67px;top:340px;font-size:16.8px;color:#3c3c3c;font-weight:400;transform:scaleX(1.0659);">Pop culture acts as a po…</div>
<div class="t" style="left:1322.64px;top:340px;font-size:16.8px;color:#3c3c3c;font-weight:400;transform:scaleX(1.0733);">Pop Culture and Identity: …</div>
<div class="t" style="left:251.95px;top:375px;font-size:16.8px;color:#222;font-weight:400;">2</div>
<div class="t" style="left:359.71px;top:381px;font-size:16.8px;color:#3c3c3c;font-weight:400;transform:scaleX(1.1563);">36080</div>
<div class="t" style="left:431.68px;top:381px;font-size:16.8px;color:#3c3c3c;font-weight:400;transform:scaleX(1.0702);">The Downfall of the Influencer? Why Audien…</div>
<div class="t" style="left:827.36px;top:381px;font-size:16.8px;color:#3c3c3c;font-weight:400;transform:scaleX(1.1034);">downfall-of-influencer…</div>
<div class="t" style="left:1096.47px;top:381px;font-size:16.8px;color:#3c3c3c;font-weight:400;transform:scaleX(1.0790);">The carefully curated, pi…</div>
<div class="t" style="left:1323.50px;top:381px;font-size:16.8px;color:#3c3c3c;font-weight:400;transform:scaleX(1.0565);">The Fall of Influencers: W…</div>
<div class="t" style="left:251.93px;top:416px;font-size:16.8px;color:#222;font-weight:400;">3</div>
<div class="t" style="left:359.78px;top:422px;font-size:16.8px;color:#3c3c3c;font-weight:400;transform:scaleX(1.1221);">36081</div>
<div class="t" style="left:430.23px;top:422px;font-size:16.8px;color:#3c3c3c;font-weight:400;transform:scaleX(1.0802);">Pop Culture Moments That Broke the Internet</div>
<div class="t" style="left:826.66px;top:422px;font-size:16.8px;color:#3c3c3c;font-weight:400;transform:scaleX(1.1204);">pop-culture-moments-…</div>
<div class="t" style="left:1096.47px;top:422px;font-size:16.8px;color:#3c3c3c;font-weight:400;transform:scaleX(1.0947);">The "distracted boyfrien…</div>
<div class="t" style="left:1322.94px;top:422px;font-size:16.8px;color:#3c3c3c;font-weight:400;transform:scaleX(1.0825);">Unforgettable Pop Cultur…</div>
<div class="t" style="left:251.96px;top:457px;font-size:16.8px;color:#222;font-weight:400;">4</div>
<div class="t" style="left:359.70px;top:463px;font-size:16.8px;color:#3c3c3c;font-weight:400;transform:scaleX(1.1617);">36082</div>
<div class="t" style="left:431.53px;top:463px;font-size:16.8px;color:#3c3c3c;font-weight:400;transform:scaleX(1.0523);">Celebrity Brands: When Fame Becomes a B…</div>
<div class="t" style="left:827.35px;top:463px;font-size:16.8px;color:#3c3c3c;font-weight:400;transform:scaleX(1.1057);">celebrity-brands-fame…</div>
<div class="t" style="left:1096.23px;top:463px;font-size:16.8px;color:#3c3c3c;font-weight:400;transform:scaleX(1.0632);">Celebrity brands have ev…</div>
<div class="t" style="left:1323.23px;top:463px;font-size:16.8px;color:#3c3c3c;font-weight:400;transform:scaleX(1.0561);">Celebrity Brand Empire: T…</div>
<div class="t" style="left:251.82px;top:498px;font-size:16.8px;color:#222;font-weight:400;">5</div>
<div class="t" style="left:359.71px;top:504px;font-size:16.8px;color:#3c3c3c;font-weight:400;transform:scaleX(1.1585);">36083</div>
<div class="t" style="left:430.27px;top:504px;font-size:16.8px;color:#3c3c3c;font-weight:400;transform:scaleX(1.0668);">How Nostalgia Became a Marketing Superp…</div>
<div class="t" style="left:826.53px;top:504px;font-size:16.8px;color:#3c3c3c;font-weight:400;transform:scaleX(1.0900);">how-nostalgia-became…</div>
<div class="t" style="left:1095.64px;top:504px;font-size:16.8px;color:#3c3c3c;font-weight:400;transform:scaleX(1.0760);">Nostalgia has transform…</div>
<div class="t" style="left:1322.67px;top:504px;font-size:16.8px;color:#3c3c3c;font-weight:400;transform:scaleX(1.0633);">Harnessing Nostalgia: Ma…</div>
<div class="t" style="left:251.85px;top:539px;font-size:16.8px;color:#222;font-weight:400;">6</div>
<div class="t" style="left:359.71px;top:545px;font-size:16.8px;color:#3c3c3c;font-weight:400;transform:scaleX(1.1497);">36084</div>
<div class="t" style="left:431.71px;top:545px;font-size:16.8px;color:#3c3c3c;font-weight:400;transform:scaleX(1.0590);">The Fashion Collabs That Defined Pop Cult…</div>
<div class="t" style="left:827.68px;top:545px;font-size:16.8px;color:#3c3c3c;font-weight:400;transform:scaleX(1.0970);">fashion-collabs-define…</div>
<div class="t" style="left:1095.66px;top:545px;font-size:16.8px;color:#3c3c3c;font-weight:400;transform:scaleX(1.0671);">Fashion collaborations h…</div>
<div class="t" style="left:1323.50px;top:545px;font-size:16.8px;color:#3c3c3c;font-weight:400;transform:scaleX(1.0542);">The Fashion Collaboratio…</div>
<div class="t" style="left:251.92px;top:580px;font-size:16.8px;color:#222;font-weight:400;">7</div>
<div class="t" style="left:359.71px;top:586px;font-size:16.8px;color:#3c3c3c;font-weight:400;transform:scaleX(1.1554);">36085</div>
<div class="t" style="left:431.53px;top:586px;font-size:16.8px;color:#3c3c3c;font-weight:400;transform:scaleX(1.0612);">Gaming Is the New Hollywood: The Rise of …</div>
<div class="t" style="left:827.39px;top:586px;font-size:16.8px;color:#3c3c3c;font-weight:400;transform:scaleX(1.0942);">gaming-new-hollywoo…</div>
<div class="t" style="left:1096.50px;top:586px;font-size:16.8px;color:#3c3c3c;font-weight:400;transform:scaleX(1.0588);">The lines between gami…</div>
<div class="t" style="left:1323.24px;top:586px;font-size:16.8px;color:#3c3c3c;font-weight:400;transform:scaleX(1.0582);">Gaming Is the New Holly…</div>
</body></html>
